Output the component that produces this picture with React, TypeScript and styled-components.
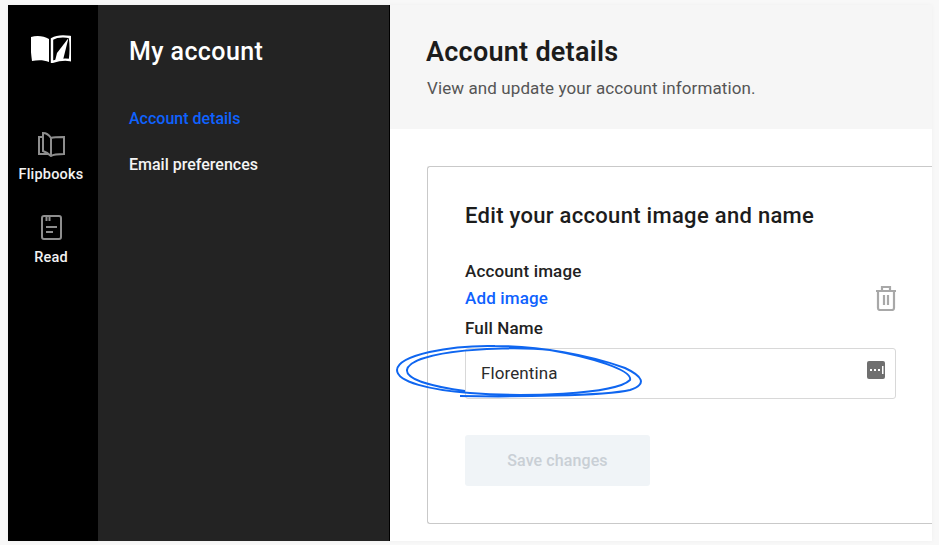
import styled, { createGlobalStyle } from "styled-components";

const GlobalStyle = createGlobalStyle`
  html, body {
    margin: 0;
    padding: 0;
    background: #f8f8f8;
  }
  * {
    box-sizing: border-box;
  }
`;

const Page = styled.div`
  width: 939px;
  height: 545px;
  padding: 5px 7px 4px 8px;
  overflow: hidden;
  font-family: Roboto, "Liberation Sans", sans-serif;
`;
const Frame = styled.div`
  display: flex;
  height: 100%;
  background: #fff;
  box-shadow: 0 0 4px rgba(0, 0, 0, 0.04);
`;
const Rail = styled.nav`
  width: 90px;
  flex-shrink: 0;
  background: #000;
  display: flex;
  flex-direction: column;
  align-items: center;
  padding: 30px 4px 0 0;
`;
const Logo = styled.svg`
  width: 40px;
  height: 28px;
  margin-bottom: 69px;
`;
const RailItem = styled.a`
  display: flex;
  flex-direction: column;
  align-items: center;
  gap: 9px;
  height: 83px;
  color: #f2f2f2;
  font-size: 14.5px;
  font-weight: 500;
  line-height: 18px;
  letter-spacing: 0.2px;
`;
const SidePanel = styled.aside`
  width: 292px;
  flex-shrink: 0;
  background: #232323;
  border-right: 1px solid #000;
  padding: 31px 31px;
`;
const PanelTitle = styled.h2`
  margin: 0 0 41px;
  color: #fff;
  font-size: 25px;
  font-weight: 500;
  line-height: 32px;
  letter-spacing: 0.4px;
`;
const PanelLink = styled.a<{ $active?: boolean }>`
  display: block;
  height: 46px;
  color: ${(props) => (props.$active ? "#0f62fe" : "#f4f4f4")};
  font-size: 16px;
  font-weight: 500;
  line-height: 20px;
`;
const Main = styled.main`
  flex: 1;
  min-width: 0;
  display: flex;
  flex-direction: column;
`;
const Header = styled.header`
  height: 124px;
  background: #f6f6f6;
  padding: 31px 36px;
`;
const Title = styled.h1`
  margin: 0 0 9px;
  color: #1c1c1c;
  font-size: 27px;
  font-weight: 600;
  line-height: 32px;
  letter-spacing: 0.25px;
`;
const Subtitle = styled.p`
  margin: 0 0 0 1px;
  color: #555;
  font-size: 17px;
  line-height: 22px;
  letter-spacing: 0.1px;
`;
const Content = styled.div`
  flex: 1;
  padding: 37px 0 17px 37px;
`;
const Card = styled.section`
  height: 100%;
  border: 1px solid #c9c9c9;
  border-right: none;
  border-radius: 3px 0 0 3px;
  padding: 35px 36px 0 37px;
`;
const CardTitle = styled.h3`
  margin: 0 0 31px;
  color: #1c1c1c;
  font-size: 22px;
  font-weight: 500;
  line-height: 28px;
  letter-spacing: 0.3px;
`;
const Label = styled.div`
  color: #222;
  font-size: 17px;
  font-weight: 500;
  line-height: 20px;
  letter-spacing: 0.15px;
`;
const ImageRow = styled.div`
  display: flex;
  justify-content: space-between;
  align-items: flex-start;
  height: 37px;
  padding-top: 7px;
`;
const AddImage = styled.a`
  color: #0f62fe;
  font-size: 17px;
  font-weight: 500;
  line-height: 20px;
  letter-spacing: 0.15px;
`;
const TrashIcon = styled.svg`
  width: 22px;
  height: 26px;
  margin: -3px -1px 0 0;
`;
const FieldWrap = styled.div`
  position: relative;
  margin-top: 10px;
`;
const Field = styled.div`
  display: flex;
  align-items: center;
  justify-content: space-between;
  height: 51px;
  border: 1px solid #d8d8d8;
  border-radius: 3px;
  padding: 0 10px 1px 15px;
  color: #2b2b2b;
  font-size: 17px;
  letter-spacing: 0.1px;
`;
const DotsIcon = styled.svg`
  width: 18px;
  height: 18px;
  margin-top: -6px;
`;
const Scribble = styled.svg`
  position: absolute;
  left: -75px;
  top: -8px;
  width: 270px;
  height: 70px;
  pointer-events: none;
`;
const SaveButton = styled.button`
  display: block;
  width: 185px;
  height: 51px;
  margin-top: 36px;
  border: none;
  border-radius: 3px;
  background: #f0f4f7;
  color: #c9cfd5;
  font-family: inherit;
  font-size: 16px;
  font-weight: 500;
  letter-spacing: 0.1px;
`;

function App() {
  return (
    <Page>
      <GlobalStyle />
      <Frame>
        <Rail>
          <Logo viewBox="0 0 40 28">
            <path d="M0 2c6-2 13-1 18 2v23c-5-2-11-2-17-1C0 18-1 10 0 2Z" fill="#fff" />
            <path d="M21 4c5-3 12-3 18-2 1 8 1 15 0 23-6-1-12 0-18 2Z" fill="#000" stroke="#fff" strokeWidth="2.4" />
            <path d="M37.5 3 26 18l-2 8 8-1Z" fill="#fff" />
          </Logo>
          <RailItem>
            <svg width="27" height="25" viewBox="0 0 27 25" fill="none" stroke="#8e8e8e" strokeWidth="2">
              <path d="M13 6C11 3 8 1 5 1v18c3 1 6 3 8 5 3-2 8-2 13-2V5c-4 0-10 0-13 1v18" />
              <path d="M5 5H1v17h10" />
            </svg>
            Flipbooks
          </RailItem>
          <RailItem>
            <svg width="21" height="25" viewBox="0 0 21 25" fill="none" stroke="#8e8e8e" strokeWidth="2">
              <rect x="1" y="1" width="19" height="23" rx="2" />
              <path d="M5.5 1v5M8.5 1v5" />
              <path d="M5 12h11M5 17h7" />
            </svg>
            Read
          </RailItem>
        </Rail>
        <SidePanel>
          <PanelTitle>My account</PanelTitle>
          <PanelLink $active>Account details</PanelLink>
          <PanelLink>Email preferences</PanelLink>
        </SidePanel>
        <Main>
          <Header>
            <Title>Account details</Title>
            <Subtitle>View and update your account information.</Subtitle>
          </Header>
          <Content>
            <Card>
              <CardTitle>Edit your account image and name</CardTitle>
              <Label>Account image</Label>
              <ImageRow>
                <AddImage>Add image</AddImage>
                <TrashIcon viewBox="0 0 22 26" fill="none" stroke="#a8a8a8" strokeWidth="2.2">
                  <path d="M1 6h20M7 6V2h8v4M3 6v17c0 1 1 2 2 2h12c1 0 2-1 2-2V6" />
                  <path d="M9 10v10M13 10v10" />
                </TrashIcon>
              </ImageRow>
              <Label>Full Name</Label>
              <FieldWrap>
                <Field>
                  Florentina
                  <DotsIcon viewBox="0 0 18 18">
                    <rect width="18" height="18" rx="2" fill="#6f6f6f" />
                    <path d="M3 8h2v2H3zM7 8h2v2H7zM11 8h2v2h-2z" fill="#fff" />
                    <rect x="15" y="5" width="1.5" height="8" fill="#fff" />
                  </DotsIcon>
                </Field>
                <Scribble viewBox="0 0 270 70" fill="none" stroke="#0f66f0" strokeWidth="2">
                  <path d="M70 56C120 57 215 56 240 50 258 44 252 36 235 28 200 15 150 6 105 6 60 5 8 15 7 30 7 42 40 50 80 53 130 57 225 55 240 40 243 30 200 17 160 10 120 5 20 10 17 30 16 40 45 47 75 51" />
                </Scribble>
              </FieldWrap>
              <SaveButton disabled>Save changes</SaveButton>
            </Card>
          </Content>
        </Main>
      </Frame>
    </Page>
  );
}

export default App;
